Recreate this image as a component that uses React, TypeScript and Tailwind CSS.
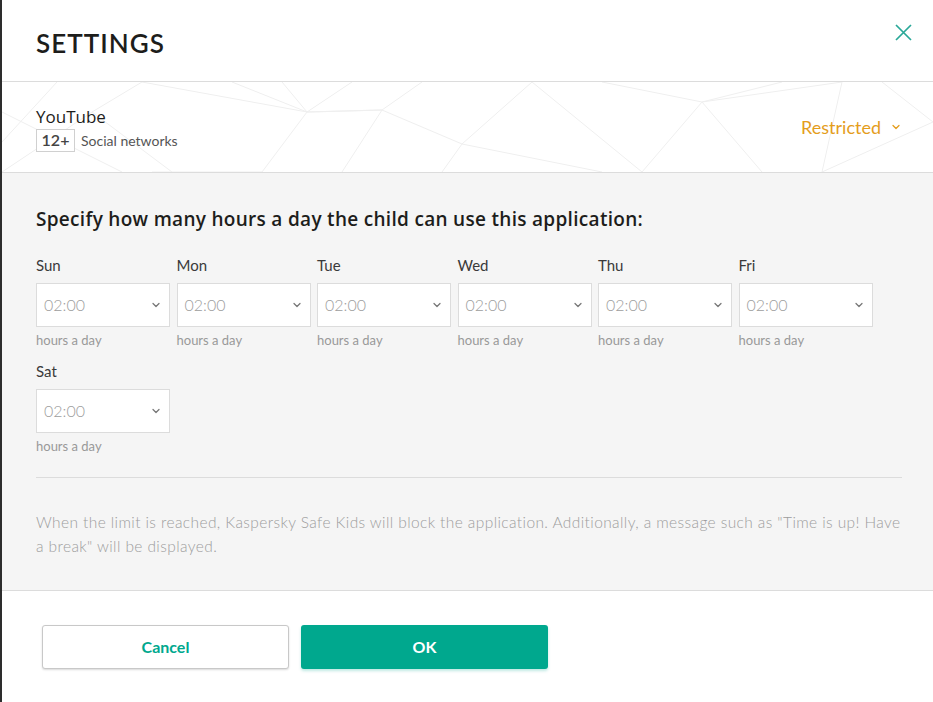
import { ChevronDown } from 'lucide-react';

const days = ['Sun', 'Mon', 'Tue', 'Wed', 'Thu', 'Fri', 'Sat'];

function PolyPattern() {
  const lines: [number, number, number, number][] = [
    [0, 60, 55, 0], [0, 90, 90, 30], [90, 30, 140, 0], [90, 30, 170, 90],
    [140, 0, 305, 30], [230, 0, 305, 30], [305, 30, 280, 0], [305, 30, 350, 0],
    [305, 30, 260, 90], [305, 30, 380, 28], [380, 28, 420, 0], [380, 28, 460, 62],
    [380, 28, 340, 90], [460, 62, 530, 0], [460, 62, 600, 90], [460, 62, 440, 90],
    [530, 0, 640, 90], [600, 0, 700, 20], [700, 20, 780, 0], [700, 20, 640, 90],
    [700, 20, 760, 90], [700, 20, 840, 0], [840, 0, 820, 90], [820, 90, 931, 40],
    [880, 0, 931, 40], [0, 30, 120, 90], [150, 90, 260, 90], [380, 28, 305, 30],
  ];
  return (
    <svg className="absolute inset-0 h-full w-full" viewBox="0 0 931 90" preserveAspectRatio="none">
      {lines.map(([x1, y1, x2, y2], i) => (
        <line key={i} x1={x1} y1={y1} x2={x2} y2={y2} stroke="#efefef" strokeWidth="1" />
      ))}
    </svg>
  );
}

function DaySelect({ day }: { day: string }) {
  return (
    <div className="w-[134px]">
      <div className="text-[15px] leading-5 text-[#3a3a3a]">{day}</div>
      <div className="mt-2 h-[44px] bg-white border border-[#dcdcdc] flex items-center justify-between pl-[7px] pr-[7px]">
        <span className="text-[16px] text-[#9d9d9d] font-light">02:00</span>
        <ChevronDown className="w-3 h-3 text-[#777]" strokeWidth={2.5} />
      </div>
      <div className="mt-1 text-[13px] leading-[18px] text-[#999]">hours a day</div>
    </div>
  );
}

export default function App() {
  return (
    <div className="flex h-[702px] w-[933px] bg-[#2d2d2d]" style={{ fontFamily: 'Lato, "Open Sans", sans-serif' }}>
      <div className="ml-[2px] flex-1 bg-white flex flex-col">
        {/* Header */}
        <div className="h-[82px] border-b border-[#dcdcdc] flex justify-between pl-[34px] pr-[21px] shrink-0">
          <h1 className="mt-[27px] text-[26px] leading-8 font-semibold tracking-[0.04em] text-[#1d1d1b]">SETTINGS</h1>
          <button className="mt-[24px] h-[17px] w-[17px] text-[#2aa898]">
            <svg viewBox="0 0 17 17" className="h-[17px] w-[17px]" fill="none" stroke="currentColor" strokeWidth="1.7">
              <path d="M1 1L16 16M16 1L1 16" />
            </svg>
          </button>
        </div>

        {/* App row */}
        <div className="relative h-[91px] border-b border-[#dcdcdc] flex items-center justify-between pl-[34px] pr-[31px] shrink-0 overflow-hidden">
          <PolyPattern />
          <div className="relative mt-[3px]">
            <div className="text-[17px] leading-[22px] font-medium text-[#1d1d1b]" style={{ fontFamily: '"Open Sans", sans-serif' }}>YouTube</div>
            <div className="mt-[1px] flex items-center gap-[6px]">
              <span className="h-[23px] w-[39px] border border-[#d0d0d0] bg-white flex items-center justify-center text-[16px] text-[#444] font-semibold">12+</span>
              <span className="text-[14px] text-[#555]">Social networks</span>
            </div>
          </div>
          <button className="relative flex items-center gap-[9px] text-[#e49d1c] text-[18px]">
            Restricted
            <ChevronDown className="w-3 h-3" strokeWidth={2.5} />
          </button>
        </div>

        {/* Limits */}
        <div className="bg-[#f5f5f5] border-b border-[#dcdcdc] pt-[34px] pb-[32px] pl-[34px] pr-[31px] shrink-0">
          <h2
            className="text-[19px] leading-6 font-semibold tracking-[0.3px] text-[#1d1d1b]"
            style={{ fontFamily: '"Open Sans", sans-serif' }}
          >
            Specify how many hours a day the child can use this application:
          </h2>
          <div className="mt-6 flex flex-wrap gap-x-[6.5px] gap-y-3">
            {days.map((d) => (
              <DaySelect key={d} day={d} />
            ))}
          </div>
          <div className="mt-[22px] border-t border-[#dcdcdc]" />
          <p className="mt-[32px] text-[15.5px] leading-[24px] tracking-[0.4px] text-[#9d9d9d] font-light">
            When the limit is reached, Kaspersky Safe Kids will block the application. Additionally, a message such as "Time is up! Have a break" will be displayed.
          </p>
        </div>

        {/* Footer */}
        <div className="flex gap-3 pl-[40px] pt-[34px]">
          <button className="h-[44px] w-[247px] rounded-[3px] border border-[#c8c8c8] bg-white shadow-[0_1px_2px_rgba(0,0,0,0.15)] text-[16px] font-bold text-[#00a88e]">
            Cancel
          </button>
          <button className="h-[44px] w-[247px] rounded-[3px] bg-[#00a88e] shadow-[0_2px_3px_rgba(0,168,142,0.25)] text-[16px] font-bold text-white">
            OK
          </button>
        </div>
      </div>
    </div>
  );
}
